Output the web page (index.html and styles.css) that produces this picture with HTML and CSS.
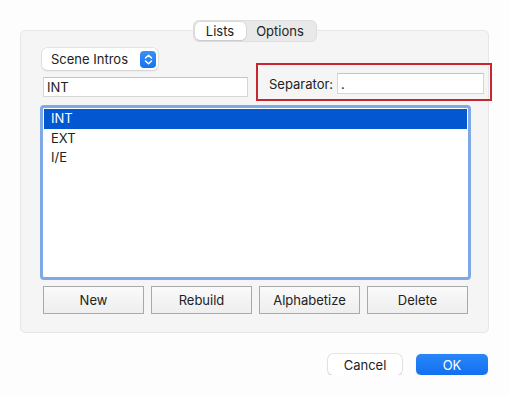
FILE: index.html
```html
<!DOCTYPE html>
<html lang="en">
<head>
  <meta charset="UTF-8" />
  <title>Scene Intros</title>
  <link rel="stylesheet" href="styles.css">
</head>
<body>

<div class="sheet">

  <div class="tabs">
    <span class="tab active">Lists</span>
    <span class="tab">Options</span>
  </div>

  <div class="panel">

    <div class="top-row">
      <div class="left-col">
        <div class="popup">
          <span>Scene Intros</span>
          <span class="stepper">
            <svg width="9" height="11" viewBox="0 0 9 11">
              <path d="M1.5 4 L4.5 1.2 L7.5 4 M1.5 7 L4.5 9.8 L7.5 7" fill="none" stroke="#fff" stroke-width="1.5" stroke-linecap="round" stroke-linejoin="round"/>
            </svg>
          </span>
        </div>
        <div class="field name-field">INT</div>
      </div>

      <div class="highlight">
        <label>Separator:</label>
        <div class="field sep-field">.</div>
      </div>
    </div>

    <div class="list">
      <div class="row selected">INT</div>
      <div class="row">EXT</div>
      <div class="row">I/E</div>
    </div>

    <div class="actions">
      <button class="btn">New</button>
      <button class="btn">Rebuild</button>
      <button class="btn">Alphabetize</button>
      <button class="btn">Delete</button>
    </div>

  </div>

  <div class="footer">
    <button class="push">Cancel</button>
    <button class="push primary">OK</button>
  </div>

</div>

</body>
</html>
```

FILE: styles.css
```css
* {
  margin: 0;
  padding: 0;
  box-sizing: border-box;
}

body {
  font-family: 'Inter', 'Roboto', sans-serif;
  font-size: 13px;
  color: #222;
  background: #fdfdfd;
}

.sheet {
  padding-top: 20px;
}

/* segmented control sitting on the panel edge */
.tabs {
  position: relative;
  z-index: 1;
  display: flex;
  width: 124px;
  height: 22px;
  margin: 0 auto -12px;
  padding: 1px;
  background: #e9e9e9;
  border: 1px solid #dedede;
  border-radius: 6px;
}

.tab {
  display: flex;
  align-items: center;
  justify-content: center;
  line-height: 1;
}

.tab:first-child {
  width: 51px;
}

.tab:last-child {
  flex: 1;
}

.tab.active {
  background: #fff;
  border-radius: 5px;
  box-shadow: 0 0 0 0.5px #c8c8c8, 0 1px 1px rgba(0, 0, 0, 0.12);
}

.panel {
  margin-left: 20px;
  width: 469px;
  height: 303px;
  padding: 17px 0 0 22px;
  background: #f5f5f5;
  border: 1px solid #e7e7e7;
  border-radius: 5px;
}

.top-row {
  display: flex;
  align-items: flex-end;
  gap: 7px;
}

.left-col {
  display: flex;
  flex-direction: column;
  flex-shrink: 0;
  gap: 7px;
  width: 206px;
}

.popup {
  display: flex;
  align-items: center;
  justify-content: space-between;
  width: 116px;
  height: 22px;
  margin-left: -1px;
  padding: 0 2px 0 9px;
  background: #fff;
  border-radius: 5px;
  box-shadow: 0 0 0 0.5px #cfcfcf, 0 1px 1.5px rgba(0, 0, 0, 0.15);
}

.stepper {
  display: flex;
  align-items: center;
  justify-content: center;
  width: 16px;
  height: 17px;
  background: linear-gradient(#3b8ff7, #1673ee);
  border-radius: 4px;
}

.field {
  height: 21px;
  padding: 0 3px;
  line-height: 20px;
  background: #fff;
  border: 1px solid #d6d6d6;
  border-top-color: #c4c4c4;
}

.name-field {
  width: 205px;
  height: 20px;
  line-height: 19px;
}

.highlight {
  display: flex;
  flex-shrink: 0;
  align-items: center;
  gap: 4px;
  width: 236px;
  height: 38px;
  margin-bottom: -4px;
  padding: 3px 6px 0 11px;
  border: 2px solid #c9252f;
}

.sep-field {
  flex: 1;
}

.list {
  width: 431px;
  height: 175px;
  margin: 8px 0 0 -3px;
  padding: 1px;
  background: #fff;
  border: 3px solid #7ea8e6;
  border-radius: 4px;
}

.row {
  height: 19.5px;
  padding-left: 7px;
  line-height: 19px;
}

.row.selected {
  background: #0358d1;
  color: #fff;
}

.actions {
  display: flex;
  gap: 7px;
  margin-top: 6px;
}

.btn {
  width: 101px;
  height: 28px;
  font: inherit;
  color: #222;
  background: linear-gradient(#fafafa, #eeeeee);
  border: 1px solid #a9a9a9;
}

.footer {
  display: flex;
  justify-content: flex-end;
  gap: 14px;
  margin-top: 21px;
  padding-right: 21px;
}

.push {
  width: 74px;
  height: 21px;
  font: inherit;
  color: #222;
  background: #fff;
  border: none;
  border-radius: 5px;
  box-shadow: 0 0 0 0.5px #cdcdcd, 0 1px 1.5px rgba(0, 0, 0, 0.18);
}

.push.primary {
  width: 72px;
  color: #fff;
  background: linear-gradient(#2a86f8, #1070f0);
  box-shadow: 0 0.5px 1px rgba(0, 0, 0, 0.2);
}
```
